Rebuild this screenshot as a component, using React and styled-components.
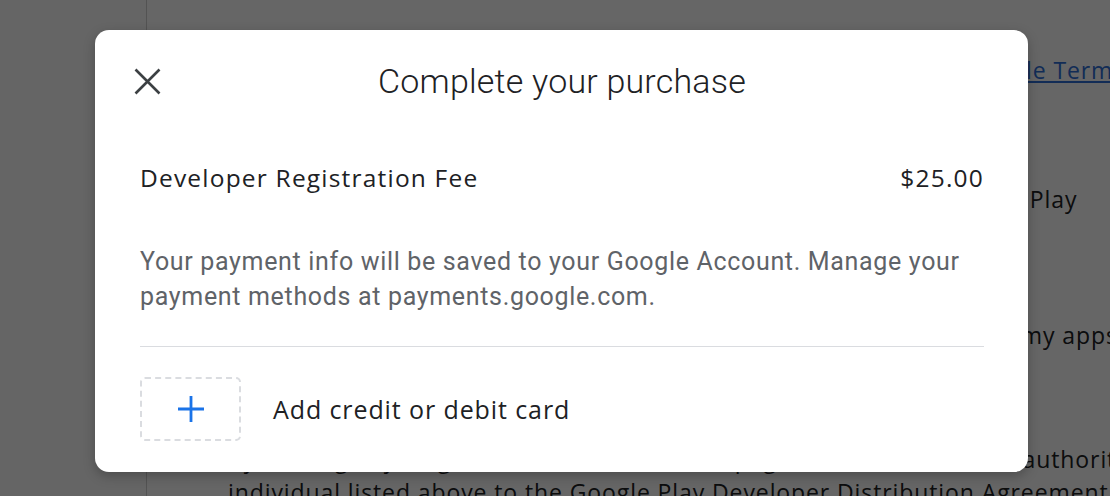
import React from 'react'
import styled, {createGlobalStyle} from 'styled-components'

const GlobalStyle = createGlobalStyle`
  html, body {
    margin: 0;
    padding: 0;
    font-family: Roboto, "Liberation Sans", Arial, sans-serif;
  }
`

const textFont = `"Open Sans", Roboto, "Liberation Sans", sans-serif`

const Page = styled.div`
  position: relative;
  width: 1110px;
  height: 496px;
  overflow: hidden;
  display: flex;
  background: #ffffff;
`

const Sidebar = styled.div`
  flex: 0 0 146px;
  background: #fcfcfc;
  border-right: 1px solid #d0d0d0;
`

const Content = styled.div`
  display: flex;
  flex-direction: column;
  padding-left: 81px;
  color: #202124;
  font-family: ${textFont};
  font-size: 23px;
  letter-spacing: 0.9px;
`

const BgLine = styled.div`
  white-space: nowrap;
  line-height: 32px;
  margin-top: ${p => p.$gap || 0}px;
`

const BgLink = styled.span`
  color: #2f6fd8;
  text-decoration: underline;
`

const Overlay = styled.div`
  position: absolute;
  inset: 0;
  background: rgba(0, 0, 0, 0.6);
  display: flex;
  align-items: flex-start;
  padding: 30px 0 0 95px;
`

const Dialog = styled.div`
  width: 933px;
  height: 442px;
  box-sizing: border-box;
  background: #ffffff;
  border-radius: 14px;
  box-shadow: 0 4px 12px rgba(0, 0, 0, 0.25);
  padding: 0 44px 0 45px;
  display: flex;
  flex-direction: column;
`

const Header = styled.div`
  position: relative;
  height: 102px;
  display: flex;
  align-items: center;
  justify-content: center;
`

const CloseButton = styled.button`
  position: absolute;
  left: -18px;
  top: 26px;
  width: 50px;
  height: 50px;
  border: none;
  background: transparent;
  padding: 0;
  display: flex;
  align-items: center;
  justify-content: center;
  cursor: pointer;
`

const Title = styled.h1`
  margin: 0;
  font-weight: 300;
  font-size: 34px;
  line-height: 40px;
  color: #202124;
  letter-spacing: 0.2px;
`

const FeeRow = styled.div`
  display: flex;
  justify-content: space-between;
  align-items: center;
  margin-top: 30px;
  font-family: ${textFont};
  font-size: 24.5px;
  line-height: 32px;
  color: #202124;
  letter-spacing: 1.2px;
`

const Note = styled.p`
  margin: 50px 0 0;
  font-size: 25px;
  line-height: 35px;
  color: #5f6368;
  letter-spacing: 0.67px;
`

const Divider = styled.hr`
  margin: 32px 0 0;
  border: none;
  border-top: 1.5px solid #dadce0;
`

const AddRow = styled.div`
  display: flex;
  align-items: center;
  gap: 32px;
  margin-top: 30px;
  font-family: ${textFont};
  font-size: 25px;
  color: #202124;
  letter-spacing: 0.9px;
`

const DashedBox = styled.div`
  width: 101px;
  height: 64px;
  box-sizing: border-box;
  border: 2px dashed #dadce0;
  border-radius: 5px;
  display: flex;
  align-items: center;
  justify-content: center;
`

function CloseIcon() {
    return (
        <svg width="27" height="27" viewBox="0 0 27 27">
            <path d="M1.5 1.5L25.5 25.5M25.5 1.5L1.5 25.5" stroke="#3c4043" strokeWidth="2.6" fill="none"/>
        </svg>
    )
}

function PlusIcon() {
    return (
        <svg width="28" height="28" viewBox="0 0 28 28">
            <path d="M14 1V27M1 14H27" stroke="#1a73e8" strokeWidth="2.8" fill="none"/>
        </svg>
    )
}

export default function App() {
    return (
        <>
            <GlobalStyle/>
            <Page>
                <Sidebar/>
                <Content>
                    <BgLine $gap={54}>
                        I accept the Google Play Developer Distribution Agreement and <BgLink>Google Terms of Service</BgLink>
                    </BgLine>
                    <BgLine $gap={97}>
                        I understand that my account will be used to publish apps on Google Play
                    </BgLine>
                    <BgLine $gap={104}>
                        I confirm that I am responsible for the content and the behaviour of my apps
                    </BgLine>
                    <BgLine $gap={92}>
                        By clicking Pay, I agree that I have read this page and that I have the authority to bind the
                    </BgLine>
                    <BgLine $gap={1}>
                        individual listed above to the Google Play Developer Distribution Agreement
                    </BgLine>
                </Content>
                <Overlay>
                    <Dialog>
                        <Header>
                            <CloseButton aria-label="Close"><CloseIcon/></CloseButton>
                            <Title>Complete your purchase</Title>
                        </Header>
                        <FeeRow>
                            <span>Developer Registration Fee</span>
                            <span>$25.00</span>
                        </FeeRow>
                        <Note>
                            Your payment info will be saved to your Google Account. Manage your payment methods at payments.google.com.
                        </Note>
                        <Divider/>
                        <AddRow>
                            <DashedBox><PlusIcon/></DashedBox>
                            <span>Add credit or debit card</span>
                        </AddRow>
                    </Dialog>
                </Overlay>
            </Page>
        </>
    )
}
